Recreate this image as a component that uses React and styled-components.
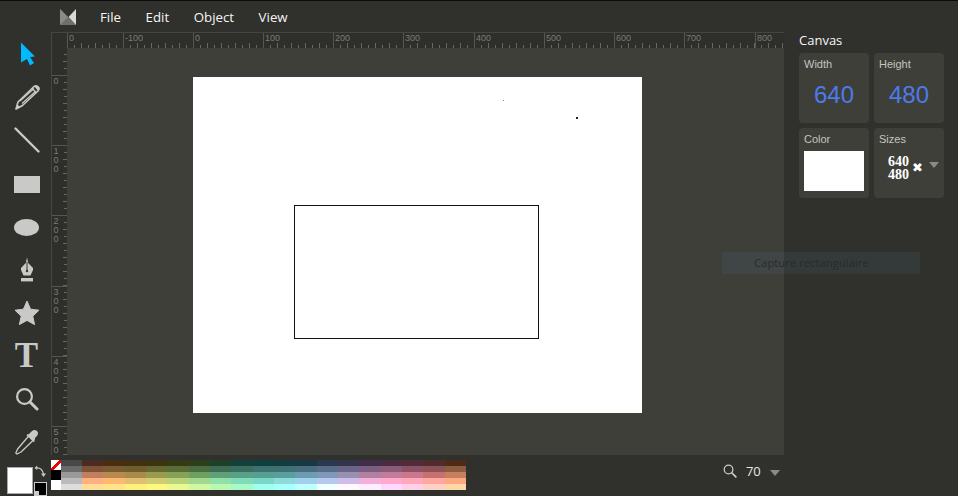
import React from 'react';
import styled, { createGlobalStyle } from 'styled-components';

const MENU = ['File', 'Edit', 'Object', 'View'];

// top ruler labels sit on the major ticks, first one is cut off at the left
const TOP_MARKS = [
  { x: 0, label: '0' },
  { x: 56, label: '-100' },
  { x: 126, label: '0' },
  { x: 196, label: '100' },
  { x: 266, label: '200' },
  { x: 336, label: '300' },
  { x: 407, label: '400' },
  { x: 477, label: '500' },
  { x: 547, label: '600' },
  { x: 617, label: '700' },
  { x: 688, label: '800' },
];

const LEFT_MARKS = [
  { y: 27, label: '0' },
  { y: 97, label: '100' },
  { y: 167, label: '200' },
  { y: 238, label: '300' },
  { y: 308, label: '400' },
  { y: 378, label: '500' },
];

// one array per palette row, left to right
const PALETTE = [
  ['#4a2c20', '#4a2e12', '#433012', '#3a3410', '#333a14', '#2c3e1a', '#1e3f28', '#143f3a', '#0f3f3f', '#123c40', '#183844', '#2a3850', '#35344c', '#402e48', '#4a2c40', '#502c38', '#502c2c', '#4c2c18'],
  ['#7f5238', '#7a5a30', '#6e5e2e', '#66682f', '#586c36', '#4a6c42', '#3e6c52', '#3a6e60', '#3e7070', '#3e7074', '#4a6c80', '#586c8a', '#6a6488', '#7c5c80', '#8a5a78', '#8c5068', '#8c5058', '#8c5c40'],
  ['#c08060', '#b88a50', '#aa8a4c', '#9a9a50', '#88a058', '#70a060', '#60a078', '#58a088', '#56a090', '#58a0a0', '#6c9cb0', '#8098b8', '#9890b0', '#b080a0', '#c07c98', '#c87888', '#c87070', '#c48060'],
  ['#ffb080', '#ffb870', '#e0c070', '#d0cc70', '#b8d478', '#a0d890', '#90e0a8', '#80dcb8', '#78d8c8', '#8fd9d9', '#a0d0ee', '#b8c8ec', '#d0bce8', '#f0b0d8', '#ffa8d0', '#ffa8bc', '#ffa8a0', '#ffa880'],
  ['#ffdc98', '#ffe48a', '#fff07c', '#fff880', '#ecf890', '#d0f8a0', '#b8f8b0', '#a8f8c8', '#a0fff0', '#a8ffff', '#c0ffff', '#f0ffff', '#fff8ff', '#ffeeff', '#ffd8ff', '#ffd0e8', '#ffd0c8', '#ffd8a8'],
];
const GRAYS = ['#484848', '#6a6a6a', '#999999', '#bbbbbb', '#dddddd'];

const ArrowIcon = () => (
  <svg width="24" height="26" viewBox="0 0 24 26">
    <path d="M6 1.5 L20 15.5 L15 16 L19 22 L15 24.5 L12 18 L6 21.5 Z" fill="#00b9ff" />
  </svg>
);

const PencilIcon = () => (
  <svg width="26" height="26" viewBox="0 0 26 26" fill="none" stroke="#c9c9c7">
    <path d="M20 2.5 C21.5 1.5 23.5 2 24.5 3.2 C25.5 4.6 25 6 24 7 L8.5 21.5 L2 25 L4 18 Z" strokeWidth="1.6" strokeLinejoin="round" />
    <path d="M18 4.5 L22.5 9 M6 17 L20 4.5 M8 19.5 L22 7" strokeWidth="1.2" />
    <path d="M2 25 L3.3 20.5 L6.5 23.2 Z" fill="#c9c9c7" stroke="none" />
    <path d="M20.5 2.5 C22 1.5 24 2.2 24.7 3.4 C25.4 4.6 25 6 24 7 Z" fill="#c9c9c7" stroke="none" />
  </svg>
);

const LineIcon = () => (
  <svg width="26" height="26" viewBox="0 0 26 26">
    <path d="M1.5 1.5 L24.5 24.5" stroke="#c9c9c7" strokeWidth="2.4" strokeLinecap="round" />
  </svg>
);

const RectIcon = () => <RectShape />;
const EllipseIcon = () => <EllipseShape />;

const PenIcon = () => (
  <svg width="14" height="26" viewBox="0 0 14 26">
    <path d="M7 0.5 L8.2 6 L13 11 L13 13 L10.5 18.5 L3.5 18.5 L1 13 L1 11 L5.8 6 Z" fill="#c9c9c7" />
    <path d="M7 5 L7 13" stroke="#33332f" strokeWidth="1" />
    <circle cx="7" cy="14" r="1.2" fill="#33332f" />
    <rect x="1" y="21" width="12" height="3.4" fill="#c9c9c7" />
  </svg>
);

const StarIcon = () => (
  <svg width="26" height="26" viewBox="0 0 26 26">
    <path d="M13 1 L16.6 9.2 L25 10.2 L18.8 16.2 L20.6 24.6 L13 20.4 L5.4 24.6 L7.2 16.2 L1 10.2 L9.4 9.2 Z" fill="#c9c9c7" strokeLinejoin="round" stroke="#c9c9c7" />
    <path d="M20.3 17.6 L23.4 20.6 L21.6 20.9 L21 22.6 Z" fill="#33332f" />
  </svg>
);

const SearchIcon = ({ size = 24, color = '#c9c9c7' }) => (
  <svg width={size} height={size} viewBox="0 0 24 24" fill="none" stroke={color}>
    <circle cx="9.5" cy="9.5" r="7.4" strokeWidth="2.2" />
    <path d="M15 15 L22 22" strokeWidth="3" strokeLinecap="round" />
  </svg>
);

const DropperIcon = () => (
  <svg width="24" height="26" viewBox="0 0 24 26" fill="none">
    <path d="M15 5.5 L19.5 10 L6 23 L2 25 L0.8 24 L2.6 20 Z" stroke="#c9c9c7" strokeWidth="1.3" strokeLinejoin="round" />
    <path d="M13.5 5.5 L16.5 2.5 C18 0.6 20.4 0.4 22 2 C23.6 3.7 23.2 6 21.5 7.5 L18.5 10.5 L20 12 L18.5 13 L11.5 6.2 L12.8 5 Z" fill="#c9c9c7" />
  </svg>
);

const SwapIcon = () => (
  <svg width="12" height="13" viewBox="0 0 12 13" fill="none" stroke="#c9c9c7" strokeWidth="1.1">
    <path d="M2 3 C5.5 2.5 8.5 4.5 9.5 9" />
    <path d="M0.5 3 L3.2 0.6 L3.2 5 Z" fill="#c9c9c7" stroke="none" />
    <path d="M7 8.4 L12 8.4 L9.5 12 Z" fill="#c9c9c7" stroke="none" />
  </svg>
);

const Logo = () => (
  <svg width="16" height="16" viewBox="0 0 16 16">
    <path d="M0 0 L16 16 L0 16 Z" fill="#6e6e6c" />
    <path d="M0 0 L8 8 L0 16 Z" fill="#8a8a88" />
    <path d="M16 0 L16 16 L8.5 8 Z" fill="#d8d8d6" />
  </svg>
);

const TopRuler = () => {
  const ticks = [];
  for (let i = 0; i < 103; i++) ticks.push(i);
  return (
    <svg width="717" height="15">
      {ticks.map((i) => {
        const x = 7 + i * 7.01;
        const tall = i % 2 === 1;
        return <TickLine key={i} x1={Math.round(x) + 0.5} x2={Math.round(x) + 0.5} y1={tall ? 10 : 12} y2={15} />;
      })}
      {TOP_MARKS.map((m) => (
        <g key={m.x}>
          <MajorLine x1={m.x + 0.5} x2={m.x + 0.5} y1={0} y2={15} />
          <RulerText x={m.x + 2} y={8}>{m.label}</RulerText>
        </g>
      ))}
    </svg>
  );
};

const LeftRuler = () => {
  const ticks = [];
  for (let i = 0; i < 58; i++) ticks.push(i);
  return (
    <svg width="15" height="407">
      {ticks.map((i) => {
        const y = 6 + i * 7.01;
        const tall = i % 2 === 1;
        return <TickLine key={i} x1={tall ? 11 : 12} x2={15} y1={Math.round(y) + 0.5} y2={Math.round(y) + 0.5} />;
      })}
      {LEFT_MARKS.map((m) => (
        <g key={m.y}>
          <MajorLine x1={0} x2={15} y1={m.y + 0.5} y2={m.y + 0.5} />
          {m.label.split('').map((d, i) => (
            <RulerText key={i} x={1.5} y={m.y + 9 + i * 9}>{d}</RulerText>
          ))}
        </g>
      ))}
    </svg>
  );
};

export default function App() {
  return (
    <Page>
      <GlobalStyle />
      <MenuBar>
        <LogoSlot><Logo /></LogoSlot>
        {MENU.map((m) => <MenuItem key={m}>{m}</MenuItem>)}
      </MenuBar>

      <Middle>
        <Toolbar>
          <Tool><ArrowIcon /></Tool>
          <Tool><PencilIcon /></Tool>
          <Tool><LineIcon /></Tool>
          <Tool><RectIcon /></Tool>
          <Tool><EllipseIcon /></Tool>
          <Tool><PenIcon /></Tool>
          <Tool><StarIcon /></Tool>
          <Tool><TextTool>T</TextTool></Tool>
          <Tool><SearchIcon /></Tool>
          <Tool><DropperIcon /></Tool>
        </Toolbar>

        <Stage>
          <Corner />
          <RulerTop><TopRuler /></RulerTop>
          <RulerLeft><LeftRuler /></RulerLeft>
          <Workspace>
            <Sheet>
              <Dot $x={310} $y={23} $size={1} $tone="#888" />
              <Dot $x={383} $y={40} $size={2} $tone="#222" />
              <DrawnRect />
            </Sheet>
          </Workspace>
        </Stage>

        <Panel>
          <PanelTitle>Canvas</PanelTitle>
          <CardGrid>
            <Card>
              <CardLabel>Width</CardLabel>
              <CardValue>640</CardValue>
            </Card>
            <Card>
              <CardLabel>Height</CardLabel>
              <CardValue>480</CardValue>
            </Card>
            <Card>
              <CardLabel>Color</CardLabel>
              <ColorSwatch />
            </Card>
            <Card>
              <CardLabel>Sizes</CardLabel>
              <SizesRow>
                <SizesText>640<br />480</SizesText>
                <SizesCross>✖</SizesCross>
                <Caret $gap={6} $top={7} />
              </SizesRow>
            </Card>
          </CardGrid>
        </Panel>
      </Middle>

      <BottomBar>
        <ColorWell>
          <FillSwatch />
          <WellSide>
            <SwapIcon />
            <StrokeSwatch />
          </WellSide>
        </ColorWell>
        <Palette>
          <BasicColumn>
            <NoneChip />
            <BasicChip $tone="#000" />
            <BasicChip $tone="#fff" />
          </BasicColumn>
          <GrayColumn>
            {GRAYS.map((g) => <Cell key={g} $tone={g} />)}
          </GrayColumn>
          {PALETTE[0].map((_, col) => (
            <HueColumn key={col}>
              {PALETTE.map((row, r) => <Cell key={r} $tone={row[col]} />)}
            </HueColumn>
          ))}
        </Palette>
        <ZoomBox>
          <SearchIcon size={14} />
          <ZoomValue>70</ZoomValue>
          <Caret $gap={9} $top={6} />
        </ZoomBox>
      </BottomBar>

      <Tooltip>Capture rectangulaire</Tooltip>
    </Page>
  );
}

const GlobalStyle = createGlobalStyle`
  html, body { margin: 0; padding: 0; background: #30302c; }
  * { box-sizing: border-box; }
`;

const Page = styled.div`
  position: relative;
  width: 958px;
  height: 496px;
  overflow: hidden;
  background: #30302c;
  border-top: 1px solid #0c0c0c;
  display: flex;
  flex-direction: column;
`;

const MenuBar = styled.div`
  height: 31px;
  display: flex;
  align-items: center;
  padding-left: 60px;
`;

const LogoSlot = styled.div`
  width: 40px;
  display: flex;
  margin-top: 1px;
`;

const MenuItem = styled.div`
  font-family: "Open Sans", sans-serif;
  font-size: 13.3px;
  color: #f6f6f6;
  margin-right: 24.5px;
`;

const Middle = styled.div`
  height: 423px;
  display: flex;
`;

const Toolbar = styled.div`
  width: 51px;
  display: flex;
  flex-direction: column;
  padding: 0 0 0 2px;
`;

const Tool = styled.div`
  height: 43.2px;
  flex-shrink: 0;
  display: flex;
  align-items: center;
  justify-content: center;
`;

const RectShape = styled.div`
  width: 26px;
  height: 17px;
  margin-top: 3px;
  background: #c9c9c7;
`;

const EllipseShape = styled.div`
  width: 25px;
  height: 17px;
  margin-top: 3px;
  border-radius: 50%;
  background: #c9c9c7;
`;

const TextTool = styled.span`
  font-family: "Liberation Serif", serif;
  font-weight: 700;
  font-size: 35px;
  line-height: 1;
  color: #c9c9c7;
`;

const Stage = styled.div`
  width: 733px;
  display: grid;
  grid-template-columns: 16px 717px;
  grid-template-rows: 16px 407px;
`;

const Corner = styled.div`
  background: #2e2e2a;
  border-top: 1px solid #454541;
  border-left: 1px solid #454541;
`;

const RulerTop = styled.div`
  background: #2e2e2a;
  border-top: 1px solid #454541;
  overflow: hidden;
  display: flex;
`;

const RulerLeft = styled.div`
  background: #2e2e2a;
  border-left: 1px solid #454541;
  overflow: hidden;
  display: flex;
`;

const TickLine = styled.line`
  stroke: #666662;
  stroke-width: 1;
`;

const MajorLine = styled.line`
  stroke: #555551;
  stroke-width: 1;
`;

const RulerText = styled.text`
  font-family: "Liberation Sans", sans-serif;
  font-size: 9px;
  fill: #7c7c78;
`;

const Workspace = styled.div`
  background: #3f3f3a;
  padding: 29px 0 0 126px;
`;

const Sheet = styled.div`
  position: relative;
  width: 449px;
  height: 336px;
  background: #fff;
  padding: 128px 0 0 101px;
`;

const Dot = styled.div`
  position: absolute;
  left: ${(p) => p.$x}px;
  top: ${(p) => p.$y}px;
  width: ${(p) => p.$size}px;
  height: ${(p) => p.$size}px;
  background: ${(p) => p.$tone};
`;

const DrawnRect = styled.div`
  width: 245px;
  height: 134px;
  border: 1px solid #111;
`;

const Panel = styled.div`
  width: 174px;
  padding: 0 14px 0 15px;
`;

const PanelTitle = styled.div`
  font-family: "Open Sans", sans-serif;
  font-size: 13px;
  line-height: 16px;
  height: 21px;
  color: #f6f6f6;
`;

const CardGrid = styled.div`
  display: grid;
  grid-template-columns: 70px 70px;
  grid-auto-rows: 70px;
  gap: 5px;
`;

const Card = styled.div`
  background: #3f3f3a;
  border-radius: 4px;
  padding: 4px 5px;
  display: flex;
  flex-direction: column;
`;

const CardLabel = styled.div`
  font-family: "Liberation Sans", sans-serif;
  font-size: 11px;
  line-height: 14px;
  color: #c4c4c0;
`;

const CardValue = styled.div`
  font-family: "Liberation Sans", sans-serif;
  font-size: 24px;
  line-height: 28px;
  margin-top: 10px;
  text-align: center;
  color: #4c7bea;
`;

const ColorSwatch = styled.div`
  width: 60px;
  height: 40px;
  margin-top: 5px;
  background: #fff;
`;

const SizesRow = styled.div`
  display: flex;
  align-items: flex-start;
  padding: 9px 0 0 9px;
`;

const SizesText = styled.div`
  font-family: "Liberation Serif", serif;
  font-weight: 700;
  font-size: 14px;
  line-height: 13px;
  color: #fff;
`;

const SizesCross = styled.div`
  font-family: "DejaVu Sans", sans-serif;
  font-size: 13px;
  line-height: 12px;
  margin: 7px 0 0 3px;
  color: #fff;
`;

const Caret = styled.div`
  width: 0;
  height: 0;
  margin: ${(p) => p.$top}px 0 0 ${(p) => p.$gap}px;
  border-left: 5px solid transparent;
  border-right: 5px solid transparent;
  border-top: 6px solid #8a8a86;
`;

const BottomBar = styled.div`
  height: 41px;
  display: flex;
`;

const ColorWell = styled.div`
  width: 51px;
  display: flex;
  padding: 12px 0 0 7px;
`;

const FillSwatch = styled.div`
  width: 26px;
  height: 27px;
  background: #fff;
  border: 1px solid #aaa;
`;

const WellSide = styled.div`
  width: 14px;
  margin-left: 1px;
  display: flex;
  flex-direction: column;
  gap: 4px;
  margin-top: -2px;
`;

const StrokeSwatch = styled.div`
  position: relative;
  width: 13px;
  height: 14px;
  background: #000;
  border: 1px solid #ccc;

  &::after {
    content: '';
    position: absolute;
    left: 0;
    bottom: 0;
    width: 4px;
    height: 4px;
    background: #ccc;
  }
`;

const Palette = styled.div`
  display: flex;
  height: 30px;
  margin-top: 5px;
`;

const BasicColumn = styled.div`
  width: 10px;
  display: flex;
  flex-direction: column;
`;

const BasicChip = styled.div`
  height: 10px;
  background: ${(p) => p.$tone};
`;

const NoneChip = styled.div`
  height: 10px;
  background: linear-gradient(45deg, #fff 40%, #e00 40%, #e00 60%, #fff 60%);
  transform: scaleX(-1);
`;

const GrayColumn = styled.div`
  width: 21px;
  display: flex;
  flex-direction: column;
`;

const HueColumn = styled.div`
  width: 21.33px;
  display: flex;
  flex-direction: column;
`;

const Cell = styled.div`
  height: 6px;
  background: ${(p) => p.$tone};
`;

const ZoomBox = styled.div`
  margin-left: 257px;
  padding-top: 9px;
  display: flex;
  align-items: flex-start;
`;

const ZoomValue = styled.div`
  font-family: "Open Sans", sans-serif;
  font-size: 13px;
  line-height: 15px;
  color: #e8e8e8;
  margin-left: 9px;
`;

const Tooltip = styled.div`
  position: absolute;
  left: 722px;
  top: 251px;
  width: 198px;
  height: 22px;
  padding-left: 32px;
  font-family: "Open Sans", sans-serif;
  font-size: 11.3px;
  line-height: 22px;
  color: #2a2a28;
  background: rgba(70, 95, 110, 0.22);
`;
